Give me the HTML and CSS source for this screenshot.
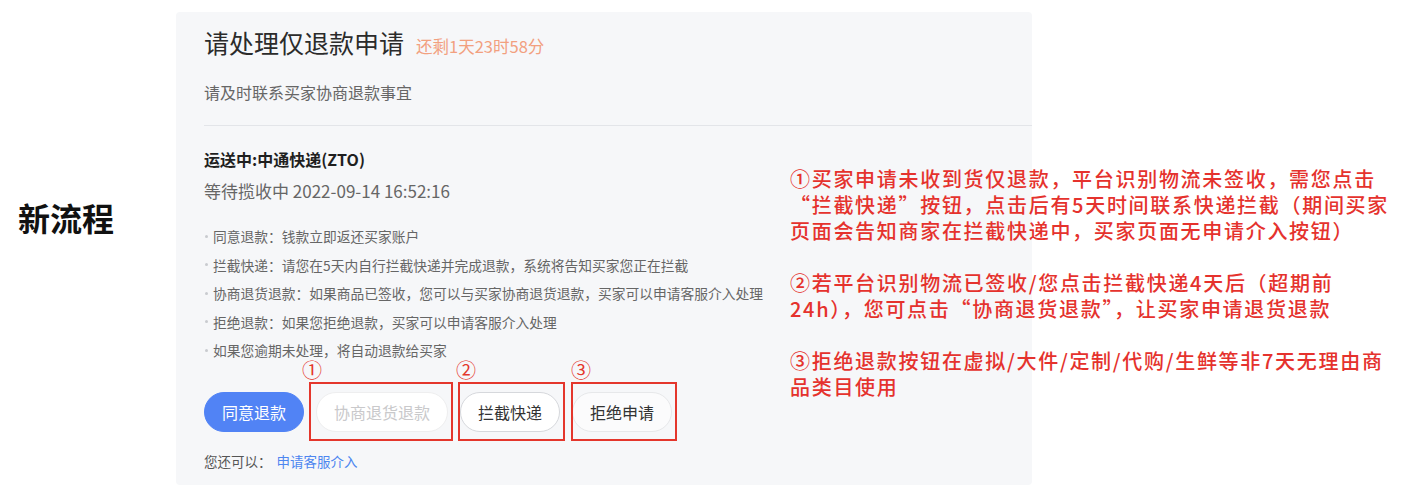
FILE: index.html
```html
<!DOCTYPE html>
<html lang="zh-CN">
<head>
<meta charset="utf-8">
<title>新流程</title>
<link rel="stylesheet" href="styles.css">
</head>
<body>
<div class="page">
  <div class="label">新流程</div>
  <section class="panel">
    <div class="head">
      <h1 class="title">请处理仅退款申请</h1>
      <span class="countdown">还剩1天23时58分</span>
    </div>
    <p class="sub">请及时联系买家协商退款事宜</p>
    <div class="divider"></div>
    <div class="ship">运送中:中通快递(ZTO)</div>
    <div class="ship-status">等待揽收中 2022-09-14 16:52:16</div>
    <ul class="tips">
      <li>同意退款：钱款立即返还买家账户</li>
      <li>拦截快递：请您在5天内自行拦截快递并完成退款，系统将告知买家您正在拦截</li>
      <li>协商退货退款：如果商品已签收，您可以与买家协商退货退款，买家可以申请客服介入处理</li>
      <li>拒绝退款：如果您拒绝退款，买家可以申请客服介入处理</li>
      <li>如果您逾期未处理，将自动退款给买家</li>
    </ul>
    <div class="actions">
      <button class="btn btn-primary">同意退款</button>
      <span class="mark mark-1"><button class="btn btn-disabled">协商退货退款</button><span class="mark-no">①</span></span>
      <span class="mark mark-2"><button class="btn btn-default">拦截快递</button><span class="mark-no">②</span></span>
      <span class="mark mark-3"><button class="btn btn-light">拒绝申请</button><span class="mark-no">③</span></span>
    </div>
    <div class="more">您还可以：<a class="link">申请客服介入</a></div>
  </section>
  <div class="notes">
    <p>①买家申请未收到货仅退款，平台识别物流未签收，需您点击<br>“拦截快递”按钮，点击后有5天时间联系快递拦截（期间买家<br>页面会告知商家在拦截快递中，买家页面无申请介入按钮）</p>
    <p>②若平台识别物流已签收/您点击拦截快递4天后（超期前<br>24h），您可点击“协商退货退款”，让买家申请退货退款</p>
    <p>③拒绝退款按钮在虚拟/大件/定制/代购/生鲜等非7天无理由商<br>品类目使用</p>
  </div>
</div>
</body>
</html>
```

FILE: styles.css
```css
* { box-sizing: border-box; }

html, body {
  margin: 0;
  padding: 0;
  background: #ffffff;
}

body {
  font-family: "Noto Sans CJK SC", "Noto Sans", sans-serif;
  color: #333;
}

.page {
  position: relative;
  width: 1402px;
  height: 496px;
  display: flex;
  align-items: flex-start;
}

.label {
  width: 176px;
  flex: 0 0 176px;
  padding-left: 18px;
  margin-top: 197px;
  font-size: 32px;
  line-height: 40px;
  font-weight: 700;
  color: #111;
}

.panel {
  width: 856px;
  flex: 0 0 856px;
  margin-top: 12px;
  padding: 13px 0 14px 28px;
  background: #f6f7f9;
  border-radius: 4px;
}

.head {
  display: flex;
  align-items: baseline;
  gap: 12px;
}

.title {
  margin: 0;
  font-size: 25px;
  line-height: 34px;
  font-weight: 400;
  color: #2b2b2b;
}

.countdown {
  font-size: 16.5px;
  color: #f2a07f;
}

.sub {
  margin: 21px 0 0;
  font-size: 16px;
  line-height: 24px;
  color: #666;
}

.divider {
  margin-top: 21px;
  height: 1px;
  background: #e3e5e9;
}

.ship {
  margin-top: 21px;
  font-size: 16px;
  line-height: 24px;
  font-weight: 700;
  color: #1f1f1f;
}

.ship-status {
  margin-top: 8px;
  font-size: 17px;
  line-height: 24px;
  color: #666;
}

.tips {
  list-style: none;
  margin: 19px 0 0;
  padding: 0;
}

.tips li {
  display: flex;
  align-items: center;
  font-size: 13.75px;
  line-height: 28.5px;
  color: #666;
}

.tips li::before {
  content: "";
  width: 3px;
  height: 3px;
  border-radius: 50%;
  background: #c9cbcf;
  margin-left: 1px;
  margin-right: 5px;
  flex: 0 0 3px;
}

.actions {
  margin-top: 27.5px;
  display: flex;
  gap: 12px;
  align-items: center;
}

.btn {
  height: 40px;
  padding: 0 17px;
  border-radius: 20px;
  border: 1px solid #d9d9d9;
  font-family: inherit;
  font-size: 16px;
  line-height: 38px;
  background: #fff;
  color: #333;
  white-space: nowrap;
}

.btn-primary {
  background: #5183f5;
  border-color: #5183f5;
  color: #fff;
}

.btn-disabled {
  background: #fff;
  border-color: #eeeeef;
  color: #c9c9cb;
}

.btn-default {
  background: #fff;
  border-color: #d6d8dc;
  color: #333;
}

.btn-light {
  background: #fbfbfc;
  border-color: #e7e8ea;
  color: #333;
}

.mark {
  position: relative;
  display: inline-flex;
}

.mark::after {
  content: "";
  position: absolute;
  top: -10px;
  bottom: -9px;
  left: -7px;
  right: -5px;
  border: 2px solid #e4362c;
  pointer-events: none;
}

.mark-2::after { left: -2px; }
.mark-3::after { left: -1px; }

.mark-no {
  position: absolute;
  top: -31px;
  font-size: 20px;
  line-height: 18px;
  color: #e4362c;
}

.mark-1 .mark-no { left: -14px; }
.mark-2 .mark-no { left: -4px; }
.mark-3 .mark-no { left: -1px; }

.more {
  margin-top: 19px;
  font-size: 13.5px;
  line-height: 20px;
  color: #555;
}

.link {
  margin-left: 5px;
  color: #4d86f0;
  text-decoration: none;
}

.notes {
  position: absolute;
  left: 790px;
  top: 166px;
  color: #e5322d;
  font-size: 20px;
  line-height: 26px;
  font-weight: 500;
  letter-spacing: 1.7px;
}

.notes p {
  margin: 0 0 26px;
}
```
